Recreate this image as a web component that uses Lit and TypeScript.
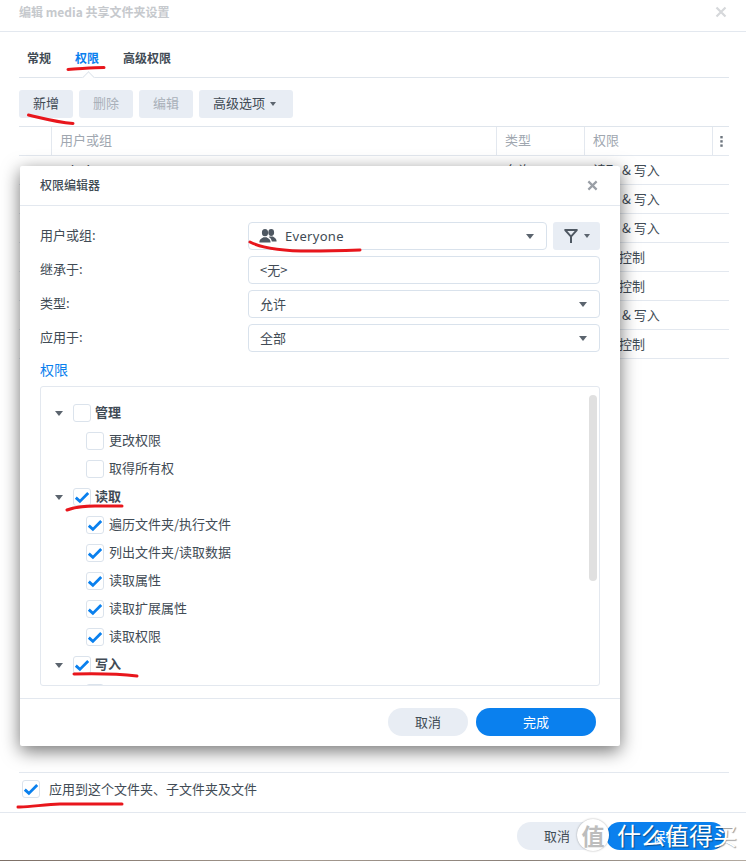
import { LitElement, html, css, svg } from "lit";
import { customElement } from "lit/decorators.js";

const check = html`<svg class="tick" viewBox="0 0 18 18" width="18" height="18"><path d="M2.8 9.6 L6.9 13.4 L15.2 5" fill="none" stroke="#0a80ee" stroke-width="2.8"/></svg>`;
const caret = html`<i class="caret"></i>`;

const rows: { name: string; type: string; perm: string }[] = [
  { name: "admin", type: "允许", perm: "读取 & 写入" },
  { name: "", type: "", perm: "读取 & 写入" },
  { name: "", type: "", perm: "读取 & 写入" },
  { name: "", type: "", perm: "完全控制" },
  { name: "", type: "", perm: "完全控制" },
  { name: "", type: "", perm: "读取 & 写入" },
  { name: "", type: "", perm: "完全控制" },
];

const tree: { label: string; parent?: boolean; on?: boolean }[] = [
  { label: "管理", parent: true },
  { label: "更改权限" },
  { label: "取得所有权" },
  { label: "读取", parent: true, on: true },
  { label: "遍历文件夹/执行文件", on: true },
  { label: "列出文件夹/读取数据", on: true },
  { label: "读取属性", on: true },
  { label: "读取扩展属性", on: true },
  { label: "读取权限", on: true },
  { label: "写入", parent: true, on: true },
  { label: "" },
];

@customElement("app-root")
export class AppRoot extends LitElement {
  static styles = css`
    :host {
      display: block;
      position: relative;
      width: 746px;
      height: 861px;
      overflow: hidden;
      background: #fff;
      color: #414b55;
      font: 13px/18px "Noto Sans CJK SC", "Noto Sans", sans-serif;
    }
    .page { height: 860px; display: flex; flex-direction: column; }
    .strip { height: 1px; background: linear-gradient(90deg,#7d6f66,#a59a90 40%,#8a8078 70%,#b3aaa0); }
    .title {
      flex: none; border-bottom: 1px solid #e3e8ef;
      display: flex; align-items: center; justify-content: space-between;
      padding: 0 19px 7px 19px; height: 24px;
      font-size: 12px; font-weight: 700; color: #c6c9cd;
    }
    .title svg { display: block; }
    .content { flex: 1; display: flex; flex-direction: column; padding: 0 17px 0 19px; min-height: 0; }
    .tabs {
      position: relative; flex: none; border-bottom: 1px solid #dfe5ec;
      display: flex; gap: 24px; padding: 17px 0 0 8px; height: 28px;
      font-size: 12px; font-weight: 700; color: #414b55;
    }
    .tabs .active { color: #0a80ee; }
    .notch {
      position: absolute; left: 65px; bottom: -5px; width: 8px; height: 8px; background: #fff;
      border-left: 1px solid #dfe5ec; border-top: 1px solid #dfe5ec; transform: rotate(45deg);
    }
    .toolbar { flex: none; display: flex; gap: 6px; margin-top: 12px; }
    .btn {
      height: 28px; min-width: 54px; padding: 0 14px 2px; box-sizing: border-box; border-radius: 3px;
      background: #e8edf4; display: flex; align-items: center; justify-content: center; gap: 5px;
    }
    .btn.off { color: #a9b0b9; }
    .btn.menu { width: 94px; padding-right: 17px; }
    .caret {
      display: inline-block; width: 0; height: 0; border: 3.5px solid transparent;
      border-top: 4px solid #5b646e; border-bottom: 0;
    }
    .btn .caret { margin-top: 2px; }
    .table { flex: none; margin-top: 8px; border-top: 1px solid #dfe5ec; }
    .grid { display: grid; grid-template-columns: 32px 445px 88px 128px 17px; }
    .head { height: 28px; border-bottom: 1px solid #e3e8ef; color: #a0a7b0; }
    .head > div { border-left: 1px solid #e3e8ef; padding-left: 8px; line-height: 26px; box-sizing: border-box; }
    .head > div:first-child { border-left: 0; }
    .head .more { padding: 0; display: flex; align-items: center; justify-content: center; }
    .row { height: 28px; border-bottom: 1px solid #e3e8ef; line-height: 27px; }
    .row > div { padding-left: 8px; }
    .row .ic { padding: 7px 0 0 14px; }
    .row > .cell { padding-left: 9px; }
    .spacer { flex: 1; }
    .apply {
      flex: none; height: 32px; border-top: 1px solid #e3e8ef;
      display: flex; align-items: center; gap: 9px; padding: 0 0 7px 3px;
    }
    .apply .t { padding-bottom: 1px; }
    .foot {
      flex: none; border-top: 1px solid #e3e8ef;
      display: flex; justify-content: flex-end; gap: 9px; padding: 9px 21px 0 0; height: 38px;
    }
    .pill {
      height: 28px; border-radius: 14px; background: #e8edf4; display: flex; align-items: center; justify-content: center;
    }
    .pill.c { width: 80px; }
    .pill.p { background: #0a80ee; color: #fff; width: 120px; }
    .foot .pill.p { width: 119px; }
    .box {
      flex: none; width: 18px; height: 18px; box-sizing: border-box; border: 1px solid #dbe3ec; border-radius: 3px;
      background: #fff; position: relative; display: block;
    }
    .tick { position: absolute; left: -1px; top: -1px; }

    .modal {
      position: absolute; left: 20px; top: 166px; width: 600px; height: 580px; background: #fff; border-radius: 2px;
      box-shadow: 0 5px 18px rgba(0,0,0,.55); display: flex; flex-direction: column;
    }
    .m-head {
      flex: none; height: 39px; border-bottom: 1px solid #e3e8ef; display: flex; align-items: center; justify-content: space-between;
      padding: 0 22px 0 20px; font-size: 12px; font-weight: 500; color: #414b55;
    }
    .m-head .t { padding-bottom: 2px; }
    .m-body { flex: 1; min-height: 0; padding: 16px 20px 12px; display: flex; flex-direction: column; }
    .form { flex: none; display: grid; grid-template-columns: 208px 1fr; row-gap: 6px; }
    .form label { line-height: 26px; }
    .field {
      height: 28px; border: 1px solid #d9e2ec; border-radius: 4px; box-sizing: border-box; background: #fff;
      display: flex; align-items: center; justify-content: space-between; padding: 0 12px 0 11px;
    }
    .field > span { padding-bottom: 1px; }
    .field .caret { border-width: 4px; border-top-width: 5px; }
    .first { display: flex; gap: 6px; }
    .first .field { flex: 1; padding: 0 12px 0 10px; }
    .who { display: flex; align-items: center; gap: 8px; font-family: "Noto Sans", sans-serif; letter-spacing: .3px; }
    .filter {
      width: 47px; height: 28px; background: #e8edf4; border-radius: 3px; display: flex; align-items: center; justify-content: center; gap: 6px;
    }
    .section { flex: none; margin: 7px 0 7px; height: 20px; font-size: 14px; line-height: 20px; color: #0a80ee; }
    .treebox {
      flex: none; position: relative; height: 300px; box-sizing: border-box; border: 1px solid #e3e8ef; border-radius: 3px;
      overflow: hidden; padding-top: 12px;
    }
    .node { height: 28px; display: flex; align-items: center; padding-left: 45px; gap: 5px; }
    .node > span:last-child { padding-bottom: 2px; }
    .node.parent { padding-left: 14px; font-weight: 700; }
    .node.parent .caret { border-width: 4px; border-top-width: 5px; margin-right: 5px; }
    .node.parent .box { margin-right: -1px; }
    .scroll { position: absolute; left: 548px; top: 8px; width: 8px; height: 186px; background: #e0e0e0; border-radius: 4px; }
    .m-foot {
      flex: none; border-top: 1px solid #e3e8ef; display: flex; justify-content: flex-end; gap: 8px; padding: 9px 24px 0 0; height: 38px;
    }
    .ink { position: absolute; inset: 0; width: 746px; height: 861px; pointer-events: none; }
    .mark {
      position: absolute; left: 577px; top: 819px; width: 32px; height: 32px; border-radius: 50%; background: #fff;
      box-shadow: 0 0 2px rgba(0,0,0,.35); display: flex; align-items: center; justify-content: center;
      font-size: 23px; font-weight: 700; color: #bdbdbd; line-height: 32px;
    }
    .mark-text {
      position: absolute; left: 617px; top: 819px; font-size: 24px; line-height: 32px; color: #fff; white-space: nowrap;
      text-shadow: 1px 1px 1px rgba(0,0,0,.4);
    }
  `;

  private x(color: string, size: number, w: number) {
    return html`<svg viewBox="0 0 12 12" width=${size} height=${size}><path d="M1.5 1.5 L10.5 10.5 M10.5 1.5 L1.5 10.5" stroke=${color} stroke-width=${w} fill="none"/></svg>`;
  }

  private user() {
    return html`<svg viewBox="0 0 12 14" width="11" height="13"><circle cx="6" cy="4" r="3.2" fill="#4a535d"/><path d="M0.5 13 C1 8.5 11 8.5 11.5 13 Z" fill="#4a535d"/></svg>`;
  }

  private node(n: { label: string; parent?: boolean; on?: boolean }) {
    return html`<div class="node ${n.parent ? "parent" : ""}">
      ${n.parent ? caret : ""}
      <span class="box">${n.on ? check : ""}</span>
      ${n.label ? html`<span>${n.label}</span>` : ""}
    </div>`;
  }

  render() {
    return html`
      <div class="page">
        <div class="title"><span>编辑 media 共享文件夹设置</span>${this.x("#d6d8db", 12, 2.2)}</div>
        <div class="content">
          <div class="tabs"><span>常规</span><span class="active">权限</span><span>高级权限</span><i class="notch"></i></div>
          <div class="toolbar">
            <div class="btn">新增</div>
            <div class="btn off">删除</div>
            <div class="btn off">编辑</div>
            <div class="btn menu">高级选项 ${caret}</div>
          </div>
          <div class="table">
            <div class="grid head">
              <div></div><div>用户或组</div><div>类型</div><div>权限</div>
              <div class="more"><svg width="3" height="11" viewBox="0 0 3 11"><g fill="#6d757e"><rect width="2.4" height="2.4" x=".3"/><rect width="2.4" height="2.4" x=".3" y="4.2"/><rect width="2.4" height="2.4" x=".3" y="8.4"/></g></svg></div>
            </div>
            ${rows.map(
              (r) => html`<div class="grid row">
                <div class="ic">${this.user()}</div><div>${r.name}</div><div class="cell">${r.type}</div><div class="cell">${r.perm}</div><div></div>
              </div>`
            )}
          </div>
          <div class="spacer"></div>
          <div class="apply"><span class="box">${check}</span><span class="t">应用到这个文件夹、子文件夹及文件</span></div>
        </div>
        <div class="foot">
          <div class="pill c">取消</div>
          <div class="pill p">保存</div>
        </div>
      </div>
      <div class="strip"></div>

      <div class="modal">
        <div class="m-head"><span class="t">权限编辑器</span>${this.x("#9a9fa6", 11, 2.4)}</div>
        <div class="m-body">
          <div class="form">
            <label>用户或组:</label>
            <div class="first">
              <div class="field">
                <span class="who">
                  <svg viewBox="0 0 18 14" width="18" height="14"><g fill="#4f5862"><ellipse cx="6" cy="3.7" rx="3.1" ry="3.6"/><path d="M0.4 13.6 C0.4 9.6 3 9.4 4.4 8.2 L7.6 8.2 C9 9.4 11.6 9.6 11.6 13.6 Z"/><ellipse cx="12.2" cy="3.5" rx="2.9" ry="3.4"/><path d="M10.2 7.4 L14 7.6 C15.2 9 17.6 9 17.6 12.6 L12.8 12.6 C12.6 10.4 11.6 9 10.2 8.4 Z"/></g></svg>
                  Everyone
                </span>
                <i class="caret"></i>
              </div>
              <div class="filter">
                <svg viewBox="0 0 14 14" width="14" height="14"><path d="M0.4 1 H13.6 M1.2 1.2 L7 7.6 L12.8 1.2 M7 7 V14" fill="none" stroke="#4f5862" stroke-width="2"/></svg>
                ${caret}
              </div>
            </div>
            <label>继承于:</label>
            <div class="field"><span>&lt;无&gt;</span></div>
            <label>类型:</label>
            <div class="field"><span>允许</span><i class="caret"></i></div>
            <label>应用于:</label>
            <div class="field"><span>全部</span><i class="caret"></i></div>
          </div>
          <div class="section">权限</div>
          <div class="treebox">
            ${tree.map((n) => this.node(n))}
            <div class="scroll"></div>
          </div>
        </div>
        <div class="m-foot">
          <div class="pill c">取消</div>
          <div class="pill p">完成</div>
        </div>
      </div>

      <svg class="ink" viewBox="0 0 746 861" fill="none" stroke="#e8161c" stroke-width="3" stroke-linecap="round">
        ${svg`
          <path d="M68 69.5 C80 69 92 67.5 104 67.5"/>
          <path d="M28.5 115 C42 118 55 122 73 123.5"/>
          <path d="M250 242 C262 248 280 251 310 251 C328 251 345 250.5 360 250"/>
          <path d="M67 510 C75 507 85 506 95 506 L122 506"/>
          <path d="M74 674 C95 673.5 120 674 137 676"/>
          <path d="M18 807 C30 807.5 45 804 60 804 L122 804"/>
        `}
      </svg>

      <div class="mark">值</div>
      <div class="mark-text">什么值得买</div>
    `;
  }
}
